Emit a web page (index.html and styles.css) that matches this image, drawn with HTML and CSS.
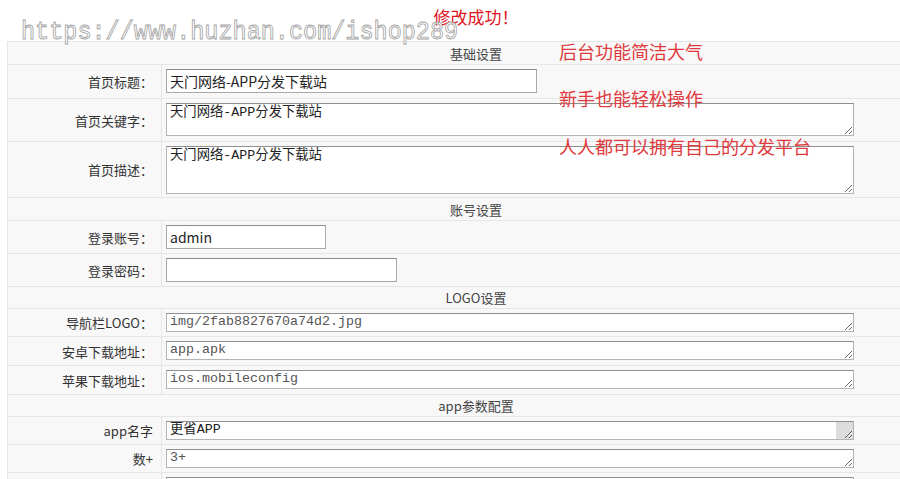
FILE: index.html
```html
<!DOCTYPE html>
<html lang="zh-CN">
<head>
    <meta charset="UTF-8">
    <title>网站设置</title>
    <link rel="stylesheet" href="styles.css">
</head>
<body>

<div class="mark">https://www.huzhan.com/ishop289</div>

<div class="main">
    <div class="msg">修改成功！</div>

    <form action="" method="post">
    <table class="set-table">
        <tr class="h-head">
            <td colspan="2" class="head">基础设置</td>
        </tr>
        <tr class="h-input">
            <td class="label">首页标题：</td>
            <td class="field"><input type="text" class="txt txt-title" value="天门网络-APP分发下载站"></td>
        </tr>
        <tr class="h-keys">
            <td class="label">首页关键字：</td>
            <td class="field"><textarea class="area area-keys">天门网络-APP分发下载站</textarea></td>
        </tr>
        <tr class="h-desc">
            <td class="label">首页描述：</td>
            <td class="field"><textarea class="area area-desc">天门网络-APP分发下载站</textarea></td>
        </tr>

        <tr class="h-head">
            <td colspan="2" class="head">账号设置</td>
        </tr>
        <tr class="h-acc">
            <td class="label">登录账号：</td>
            <td class="field"><input type="text" class="txt txt-user" value="admin"></td>
        </tr>
        <tr class="h-acc">
            <td class="label">登录密码：</td>
            <td class="field"><input type="password" class="txt txt-pwd" value=""></td>
        </tr>

        <tr class="h-head2">
            <td colspan="2" class="head">LOGO设置</td>
        </tr>
        <tr class="h-line">
            <td class="label">导航栏LOGO：</td>
            <td class="field"><textarea class="area area-line gray">img/2fab8827670a74d2.jpg</textarea></td>
        </tr>
        <tr class="h-line2">
            <td class="label">安卓下载地址：</td>
            <td class="field"><textarea class="area area-line gray">app.apk</textarea></td>
        </tr>
        <tr class="h-line2">
            <td class="label">苹果下载地址：</td>
            <td class="field"><textarea class="area area-line gray">ios.mobileconfig</textarea></td>
        </tr>

        <tr class="h-head2">
            <td colspan="2" class="head">app参数配置</td>
        </tr>
        <tr class="h-line">
            <td class="label">app名字</td>
            <td class="field"><textarea class="area area-line area-grip">更省APP</textarea></td>
        </tr>
        <tr class="h-line">
            <td class="label">数+</td>
            <td class="field"><textarea class="area area-line gray">3+</textarea></td>
        </tr>
        <tr class="h-line">
            <td class="label"></td>
            <td class="field"><textarea class="area area-line gray"></textarea></td>
        </tr>
    </table>
    </form>

    <!-- 宣传文字 -->
    <div class="tip tip1">后台功能简洁大气</div>
    <div class="tip tip2">新手也能轻松操作</div>
    <div class="tip tip3">人人都可以拥有自己的分发平台</div>
</div>

</body>
</html>
```

FILE: styles.css
```css
/* 页面基础 */
html, body {
    margin: 0;
    padding: 0;
    background: #fff;
    overflow: hidden;
}
body {
    font-family: "Microsoft YaHei", "Noto Sans CJK SC", "Noto Sans", sans-serif;
    font-size: 13px;
    color: #333;
}

/* 水印 */
.mark {
    position: absolute;
    top: 17px;
    left: 21px;
    z-index: 5;
    font-family: "Liberation Mono", monospace;
    font-size: 23.5px;
    line-height: 28px;
    color: rgba(255, 255, 255, 0.9);
    -webkit-text-stroke: 0.8px #a4a4a4;
    transform: scaleY(1.12);
    transform-origin: left top;
    pointer-events: none;
    white-space: nowrap;
}

.main {
    position: relative;
    width: 938px;
    margin-left: 7px;
}

/* 提示信息 */
.msg {
    box-sizing: border-box;
    height: 41px;
    padding-top: 7px;
    text-align: center;
    font-size: 17px;
    line-height: 20px;
    color: #e0141e;
}

/* 设置表格 */
.set-table {
    width: 100%;
    border-collapse: collapse;
    background: #f8f8f9;
}
.set-table td {
    border: 1px solid #e6e6e8;
    padding: 0;
}
.set-table .head {
    text-align: center;
    color: #444;
    vertical-align: middle;
}
.set-table .label {
    width: 145px;
    text-align: right;
    padding-right: 8px;
    vertical-align: middle;
    color: #333;
}
.set-table .field {
    vertical-align: top;
    padding: 4px 4px 0;
}

/* 行高 */
.h-head td { height: 22px; }
.h-head2 td { height: 21px; }
.h-input td { height: 29px; }
.h-keys td { height: 38px; }
.h-desc td { height: 51px; }
.h-acc td { height: 28px; }
.h-line td { height: 23px; }
.h-line2 td { height: 24px; }

/* 输入框 */
.txt {
    display: block;
    box-sizing: border-box;
    height: 24px;
    margin: 0;
    padding: 1px 3px;
    border: 1px solid #a9a9a9;
    border-top-color: #8c8c8c;
    background: #fff;
    font-family: "Microsoft YaHei", "Noto Sans CJK SC", sans-serif;
    font-size: 14px;
    color: #222;
    outline: none;
}
.txt-title { width: 371px; }
.txt-user { width: 160px; }
.txt-pwd { width: 231px; }

.area {
    display: block;
    box-sizing: border-box;
    width: 688px;
    margin: 0;
    padding: 1px 3px;
    border: 1px solid #b4b4b4;
    border-top-color: #8f8f8f;
    background: #fff;
    font-family: "Liberation Mono", "Noto Sans CJK SC", monospace;
    font-size: 13.33px;
    line-height: 16px;
    color: #222;
    outline: none;
    overflow: hidden;
}
.area-keys { height: 33px; }
.area-desc { height: 48px; }
.area-line { height: 19px; padding-top: 0; }
.area.gray { color: #555; }

/* 带灰色拖拽角 */
.area-grip {
    background: #fff linear-gradient(#dcdcdc, #dcdcdc) no-repeat right 0 bottom 0 / 17px 18px;
}

/* 宣传文字 */
.tip {
    position: absolute;
    left: 552px;
    font-size: 18px;
    line-height: 22px;
    color: #e03a3c;
    white-space: nowrap;
}
.tip1 { top: 40px; }
.tip2 { top: 87px; }
.tip3 { top: 135px; }
```
